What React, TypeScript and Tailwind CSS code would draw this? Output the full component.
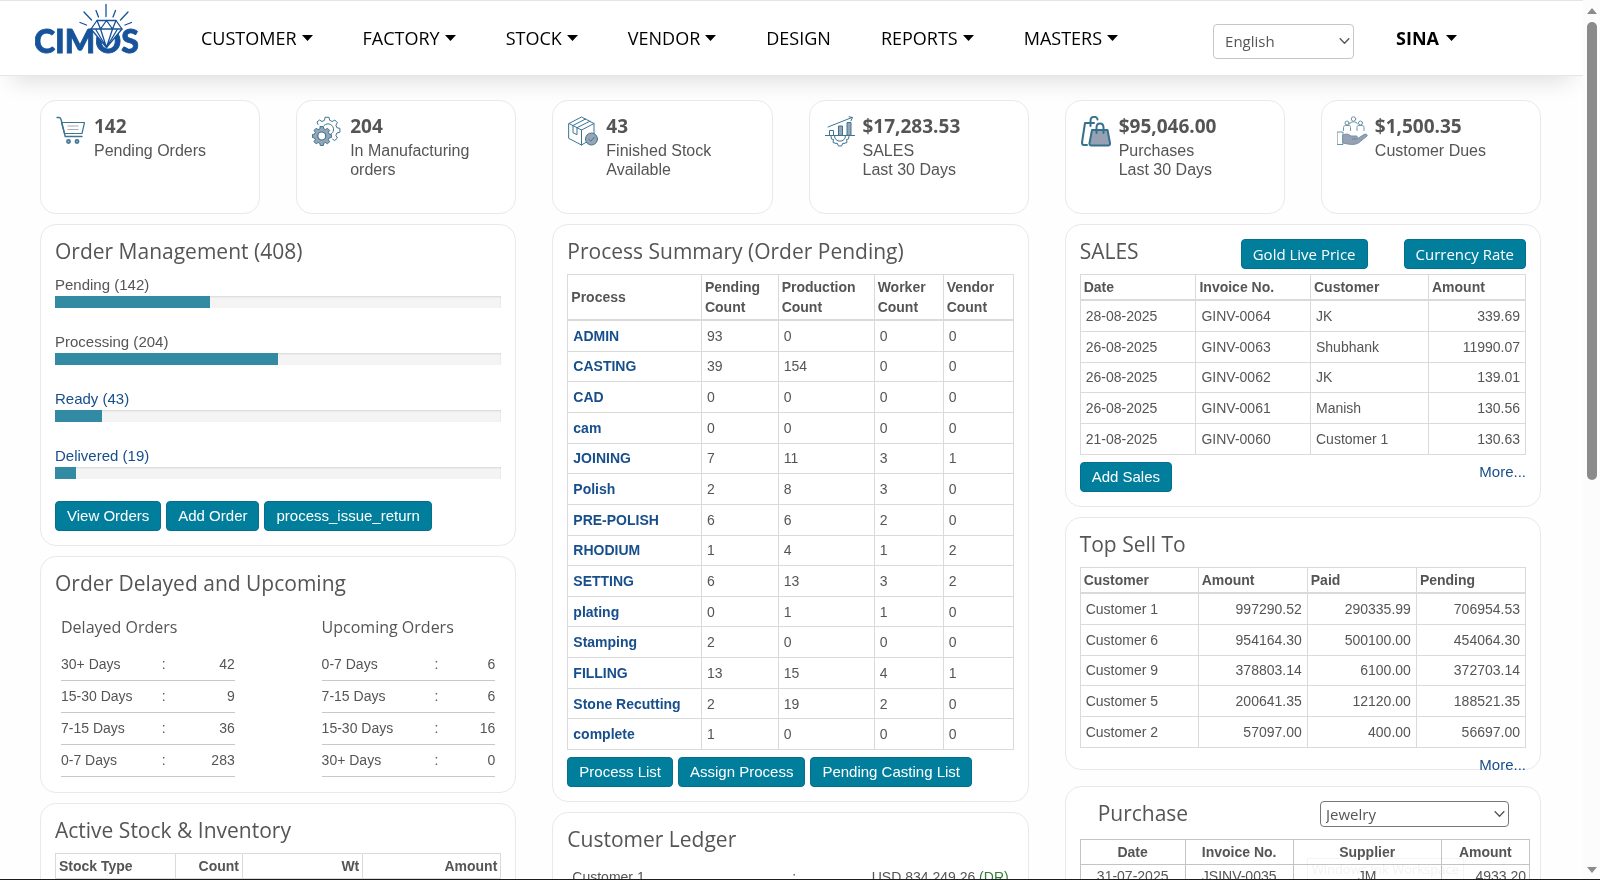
import type { ReactNode } from 'react';

const sans = "font-['Open_Sans',sans-serif]";

const menu = [
  { label: 'CUSTOMER', drop: true },
  { label: 'FACTORY', drop: true },
  { label: 'STOCK', drop: true },
  { label: 'VENDOR', drop: true },
  { label: 'DESIGN', drop: false },
  { label: 'REPORTS', drop: true },
  { label: 'MASTERS', drop: true },
];

const orders = [
  { label: 'Pending', count: 142, link: false },
  { label: 'Processing', count: 204, link: false },
  { label: 'Ready', count: 43, link: true },
  { label: 'Delivered', count: 19, link: true },
];
const totalOrders = orders.reduce((sum, o) => sum + o.count, 0);

const delayed = [['30+ Days', '42'], ['15-30 Days', '9'], ['7-15 Days', '36'], ['0-7 Days', '283']];
const upcoming = [['0-7 Days', '6'], ['7-15 Days', '6'], ['15-30 Days', '16'], ['30+ Days', '0']];

const processes: [string, number, number, number, number][] = [
  ['ADMIN', 93, 0, 0, 0],
  ['CASTING', 39, 154, 0, 0],
  ['CAD', 0, 0, 0, 0],
  ['cam', 0, 0, 0, 0],
  ['JOINING', 7, 11, 3, 1],
  ['Polish', 2, 8, 3, 0],
  ['PRE-POLISH', 6, 6, 2, 0],
  ['RHODIUM', 1, 4, 1, 2],
  ['SETTING', 6, 13, 3, 2],
  ['plating', 0, 1, 1, 0],
  ['Stamping', 2, 0, 0, 0],
  ['FILLING', 13, 15, 4, 1],
  ['Stone Recutting', 2, 19, 2, 0],
  ['complete', 1, 0, 0, 0],
];

const sales = [
  ['28-08-2025', 'GINV-0064', 'JK', '339.69'],
  ['26-08-2025', 'GINV-0063', 'Shubhank', '11990.07'],
  ['26-08-2025', 'GINV-0062', 'JK', '139.01'],
  ['26-08-2025', 'GINV-0061', 'Manish', '130.56'],
  ['21-08-2025', 'GINV-0060', 'Customer 1', '130.63'],
];

const topSell = [
  ['Customer 1', '997290.52', '290335.99', '706954.53'],
  ['Customer 6', '954164.30', '500100.00', '454064.30'],
  ['Customer 9', '378803.14', '6100.00', '372703.14'],
  ['Customer 5', '200641.35', '12120.00', '188521.35'],
  ['Customer 2', '57097.00', '400.00', '56697.00'],
];

function Caret() {
  return (
    <svg width="11" height="6" viewBox="0 0 11 6" fill="currentColor" aria-hidden="true">
      <path d="M0 0h11L5.500 6z" />
    </svg>
  );
}

function Chevron() {
  return (
    <svg width="11" height="7" viewBox="0 0 11 7" fill="none" stroke="#555" strokeWidth="1.3" className="pointer-events-none absolute right-1 top-1/2 -translate-y-1/2" aria-hidden="true">
      <path d="M.7.7l4.800 5 4.800-5" />
    </svg>
  );
}

function Logo() {
  return (
    <svg width="112" height="60" viewBox="0 0 112 60" role="img" aria-label="CIMOS" className="shrink-0">
      <text x="-1" y="52" fill="#17539a" stroke="#17539a" strokeWidth="0.8" fontFamily="Lato, sans-serif" fontWeight="900" fontSize="32">CIMOS</text>
      <path d="M62 19h19l6 9-15.500 18L56 28z" fill="#fff" />
      <g fill="none" stroke="#17539a" strokeWidth="1.300" strokeLinejoin="round" strokeLinecap="round">
        <path d="M62 19.500h19l6 8.500L71.500 46.500 56 28z" />
        <path d="M56 28h31M62 19.500l3.500 8.500 6-8.500 6 8.500 3.500-8.500M65.500 28l6 18.500 6-18.500M60.500 28l11 18.500 11-18.500" />
        <path d="M71 3.500v12M61 9.500l2.500 6.500M80.500 9.500L78 16M49 11l7.500 8M93 11l-7.500 8M45 21.500l6.500 2.500M96.500 21.500L90 24" />
      </g>
    </svg>
  );
}

const line = { fill: 'none', stroke: '#3d7591', strokeWidth: 1.2, strokeLinejoin: 'round', strokeLinecap: 'round' } as const;

function CartIcon() {
  return (
    <svg width="30" height="30" viewBox="0 0 30 30" aria-hidden="true" {...line}>
      <path d="M1 1.500h2.500c1 0 1.300 1 1.700 2.500l4 16.500H26" strokeWidth="1.400" />
      <path d="M5.500 6.500H28.500l-2.500 11H8.500z" />
      <path d="M12 10h10M12 13.500h10" stroke="#a3acb8" />
      <circle cx="12.500" cy="25.500" r="1.700" fill="#a3acb8" strokeWidth="1.500" />
      <circle cx="21" cy="25.500" r="1.700" fill="#a3acb8" strokeWidth="1.500" />
    </svg>
  );
}

function GearsIcon() {
  return (
    <svg width="30" height="30" viewBox="0 0 30 30" aria-hidden="true" {...line}>
      <path d="M6 8.500L5 6l2.500-2 2.500 1.500 2.500-1.200.5-3h4l.7 3 2.500 1.200 2.600-1.500 2.600 2.700-1.500 2.500 1 2.500 3 .7v3.800l-3 .8-1 2.400 1.500 2.600-2.700 2.500-2-1.200" strokeWidth="1" />
      <path d="M12 9.500c4-4 10-.5 9.500 4.500-.2 2-1 3-2.500 4" strokeWidth="1" />
      <path d="M8.300 10.500h3l.5 2.300 1.700.8 2-1.300 2.100 2.100-1.300 2 .8 1.700 2.300.4v3l-2.300.5-.8 1.700 1.300 2-2.100 2.100-2-1.300-1.700.7-.5 2.300h-3l-.5-2.300-1.700-.7-2 1.300L2 25.700l1.300-2-.8-1.700-2-.5v-3l2-.4.8-1.700-1.300-2 2.100-2.100 2 1.300 1.700-.8z" fill="#98a5b4" strokeWidth="1" />
      <circle cx="9.800" cy="20" r="4" fill="#fff" />
    </svg>
  );
}

function BoxIcon() {
  return (
    <svg width="30" height="30" viewBox="0 0 30 30" aria-hidden="true" {...line} strokeWidth="1">
      <path d="M1 7.500L13.500 1 26 7.500v14L13.500 29 1 22.500z" />
      <path d="M1 7.500L13.500 14 26 7.500M13.500 14v15M5 9.500L17.500 3M9 11.700L22 5.200M5 9.700v7l4 2v-7" />
      <circle cx="23.500" cy="23" r="6" fill="#98a5b4" />
      <path d="M20.800 23.200l2 2 3.600-4" />
    </svg>
  );
}

function ChartIcon() {
  return (
    <svg width="30" height="31" viewBox="0 0 30 31" aria-hidden="true" {...line} strokeWidth="1">
      <path d="M3 11L27 1.500M24 .8l3.500.7-1.500 3.200M0 19.500h30" />
      <path d="M4.500 19v-4.500h4V19" />
      <path d="M13.500 19v-9h4v9zM22 19V6.500h4V19z" fill="#98a5b4" />
      <path d="M6 20l.5 3 2 .5-.5 3 3 1 1-.5 1.500 3h3l1.500-3 1 .5 3-1-.5-3 2-.5.500-3M9.500 20c0 7 11 7 11 0" />
    </svg>
  );
}

function BagsIcon() {
  return (
    <svg width="30" height="31" viewBox="0 0 30 31" aria-hidden="true" {...line} stroke="#35708f" strokeWidth="2">
      <path d="M6 29H3c-1.500 0-2-1-2-2.500L4 7h9" />
      <path d="M9.500 10V5c0-5.500 7-5 7-1.500" />
      <path d="M11 14h15.500L29 27c.2 1.500-.5 2.500-2 2.500H10.500c-1.500 0-2.200-1-2-2.500z" fill="#98a1b3" />
      <path d="M15.500 17v-5.500c0-5.500 7-5.500 7 0V17" />
    </svg>
  );
}

function DuesIcon() {
  return (
    <svg width="31" height="31" viewBox="0 0 31 31" aria-hidden="true" {...line} stroke="#6d93a8" strokeWidth="1">
      <circle cx="16.500" cy="3" r="2.200" />
      <circle cx="10" cy="7" r="2" />
      <circle cx="23.500" cy="7" r="2" />
      <path d="M12.500 8c.5-3 7.500-3 8 0M6.500 14.500v-3c0-1.500 1-2 2-2H12c1 0 1.500.8 1.500 2v3M20 14.500v-3c0-1.500.8-2 2-2h3c1.500 0 2 .8 2 2v3" />
      <path d="M.5 16h5.500v12.500H.5z" />
      <path d="M6 19c4-2 6-.5 8 1h5c2 0 2 2.500 0 2.700l-4 .3h5l7-4.500c2-1 4 .2 3 1.500l-8 6.500c-4 3-10 2-16 .5z" fill="#98a1b3" />
    </svg>
  );
}

const stats = [
  { icon: <CartIcon />, value: '142', label: ['Pending Orders'] },
  { icon: <GearsIcon />, value: '204', label: ['In Manufacturing', 'orders'] },
  { icon: <BoxIcon />, value: '43', label: ['Finished Stock', 'Available'] },
  { icon: <ChartIcon />, value: '$17,283.53', label: ['SALES', 'Last 30 Days'] },
  { icon: <BagsIcon />, value: '$95,046.00', label: ['Purchases', 'Last 30 Days'] },
  { icon: <DuesIcon />, value: '$1,500.35', label: ['Customer Dues'] },
];

function Panel({ children }: { children: ReactNode }) {
  return <section className="rounded-2xl border border-[#e9e9e9] bg-white p-[14px]">{children}</section>;
}

function Title({ children }: { children: ReactNode }) {
  return <h2 className={`${sans} mb-[11px] text-[21px] leading-6`}>{children}</h2>;
}

function Btn({ children }: { children: ReactNode }) {
  return (
    <button className="h-[30px] whitespace-nowrap rounded border border-[#04708c] bg-[#017e9c] px-[11px] text-white">
      {children}
    </button>
  );
}

function Days({ title, rows, labelWidth }: { title: string; rows: string[][]; labelWidth: string }) {
  return (
    <div className="w-[40%]">
      <h3 className={`${sans} mb-[9px] text-base leading-6`}>{title}</h3>
      <table className="w-full text-sm">
        <tbody>
          {rows.map(([k, v]) => (
            <tr key={k} className="border-b border-[#c8c8c8]">
              <td className={`h-8 ${labelWidth}`}>{k}</td>
              <td>:</td>
              <td className="text-right">{v}</td>
            </tr>
          ))}
        </tbody>
      </table>
    </div>
  );
}

const th = 'border border-[#dadada] border-b-2 px-[3px] py-[2px] text-left font-bold';
const thRight = 'border border-[#dadada] border-b-2 px-[3px] py-[2px] text-right font-bold';
const td = 'border border-[#dadada] px-[5px] py-1';
const purchaseTh = 'border border-[#c4c4c4] px-[3px] py-[2px]';
const purchaseTd = 'border border-[#c4c4c4] px-[3px] py-px';

export default function App() {
  return (
    <div className="flex h-screen flex-col overflow-hidden bg-[#fefefe] font-['Liberation_Sans',Arial,sans-serif] text-[15px] leading-5 text-[#555]">
      <div className="flex min-h-0 flex-1">
        <div className="min-w-0 flex-1 overflow-hidden">
          <header className={`${sans} flex h-[76px] items-center border-b border-t border-[#e6e6e6] bg-white pl-[35px] shadow-[0_16px_24px_-12px_rgba(0,0,0,0.14)]`}>
            <a href="#home" className="self-start">
              <Logo />
            </a>
            <nav className="ml-[54px] flex gap-[50px] text-lg text-black">
              {menu.map((m) => (
                <a key={m.label} href="#menu" className="flex items-center gap-[5px]">
                  {m.label}
                  {m.drop && <Caret />}
                </a>
              ))}
            </nav>
            <div className="relative ml-auto mt-[6px]">
              <select aria-label="Language" className="h-[35px] w-[141px] appearance-none rounded border border-[#c6c6c6] bg-white px-[11px] text-[15px] text-[#555]">
                <option>English</option>
              </select>
              <Chevron />
            </div>
            <button className="ml-[42px] mr-[126px] flex items-center gap-[7px] text-lg font-bold text-black">
              SINA <Caret />
            </button>
          </header>

          <main className="pl-10 pr-[42px] pt-6">
            <div className="grid grid-cols-6 gap-9">
              {stats.map((s) => (
                <div key={s.value} className="flex h-[114px] gap-2 rounded-2xl border border-[#e9e9e9] bg-white py-[15px] pl-[15px]">
                  <div className="w-[30px] shrink-0">{s.icon}</div>
                  <div>
                    <p className={`${sans} text-[19px] font-bold leading-5`}>{s.value}</p>
                    <p className="mt-[5px] text-base leading-[19px]">
                      {s.label.map((l) => (
                        <span key={l} className="block">{l}</span>
                      ))}
                    </p>
                  </div>
                </div>
              ))}
            </div>

            <div className="mt-[10px] grid grid-cols-3 items-start gap-9">
              <div className="flex flex-col gap-[10px]">
                <Panel>
                  <Title>Order Management ({totalOrders})</Title>
                  <div className="flex flex-col gap-6 pt-px">
                    {orders.map((o) => (
                      <div key={o.label}>
                        {o.link ? (
                          <a href="#orders" className="block text-[#174e8c]">{o.label} ({o.count})</a>
                        ) : (
                          <p>{o.label} ({o.count})</p>
                        )}
                        <div className="mt-px h-3 bg-[#f4f4f4] shadow-[inset_0_1px_2px_rgba(0,0,0,0.12)]">
                          <div className="h-full bg-[#338aa3]" style={{ width: `${(o.count / totalOrders) * 100}%` }} />
                        </div>
                      </div>
                    ))}
                  </div>
                  <div className="mt-[22px] flex gap-[5px]">
                    <Btn>View Orders</Btn>
                    <Btn>Add Order</Btn>
                    <Btn>process_issue_return</Btn>
                  </div>
                </Panel>

                <Panel>
                  <Title>Order Delayed and Upcoming</Title>
                  <div className="flex justify-between px-[6px] pb-px pt-[9px]">
                    <Days title="Delayed Orders" rows={delayed} labelWidth="w-[58%]" />
                    <Days title="Upcoming Orders" rows={upcoming} labelWidth="w-[65%]" />
                  </div>
                </Panel>

                <Panel>
                  <Title>Active Stock &amp; Inventory</Title>
                  <table className="w-full table-fixed text-sm">
                    <thead>
                      <tr>
                        <th className={`${th} w-[27%]`}>Stock Type</th>
                        <th className={`${thRight} w-[15%]`}>Count</th>
                        <th className={`${thRight} w-[27%]`}>Wt</th>
                        <th className={thRight}>Amount</th>
                      </tr>
                    </thead>
                  </table>
                </Panel>
              </div>

              <div className="flex flex-col gap-[10px]">
                <Panel>
                  <Title>Process Summary (Order Pending)</Title>
                  <table className="h-[476px] w-full table-fixed text-sm">
                    <thead>
                      <tr>
                        <th className={`${th} w-[30%]`}>Process</th>
                        <th className={th}>Pending Count</th>
                        <th className={`${th} w-[96px]`}>Production Count</th>
                        <th className={`${th} w-[69px]`}>Worker Count</th>
                        <th className={`${th} w-[70px]`}>Vendor Count</th>
                      </tr>
                    </thead>
                    <tbody>
                      {processes.map(([name, ...counts]) => (
                        <tr key={name}>
                          <td className={td}>
                            <a href="#process" className="font-bold text-[#174e8c]">{name}</a>
                          </td>
                          {counts.map((c, i) => (
                            <td key={i} className={td}>{c}</td>
                          ))}
                        </tr>
                      ))}
                    </tbody>
                  </table>
                  <div className="mt-[7px] flex gap-[5px]">
                    <Btn>Process List</Btn>
                    <Btn>Assign Process</Btn>
                    <Btn>Pending Casting List</Btn>
                  </div>
                </Panel>

                <Panel>
                  <Title>Customer Ledger</Title>
                  <div className="flex justify-between px-[5px] pt-[5px] text-sm">
                    <span className="w-[220px]">Customer 1</span>
                    <span className="flex-1">:</span>
                    <span>USD 834,249.26 <span className="text-[#2e7d32]">(DR)</span></span>
                  </div>
                </Panel>
              </div>

              <div className="flex flex-col gap-[10px]">
                <Panel>
                  <div className="flex items-start">
                    <Title>SALES</Title>
                    <div className={`${sans} ml-auto flex gap-9`}>
                      <Btn>Gold Live Price</Btn>
                      <Btn>Currency Rate</Btn>
                    </div>
                  </div>
                  <table className="h-[181px] w-full table-fixed text-sm">
                    <thead>
                      <tr>
                        <th className={`${th} w-[26%]`}>Date</th>
                        <th className={th}>Invoice No.</th>
                        <th className={`${th} w-[118px]`}>Customer</th>
                        <th className={`${th} w-[97px]`}>Amount</th>
                      </tr>
                    </thead>
                    <tbody>
                      {sales.map((r) => (
                        <tr key={r[1]}>
                          <td className={td}>{r[0]}</td>
                          <td className={td}>{r[1]}</td>
                          <td className={td}>{r[2]}</td>
                          <td className={`${td} text-right`}>{r[3]}</td>
                        </tr>
                      ))}
                    </tbody>
                  </table>
                  <div className="mt-[7px] flex items-start justify-between">
                    <Btn>Add Sales</Btn>
                    <a href="#sales" className="text-[#174e8c]">More...</a>
                  </div>
                </Panel>

                <Panel>
                  <Title>Top Sell To</Title>
                  <table className="h-[181px] w-full table-fixed text-sm">
                    <thead>
                      <tr>
                        <th className={`${th} w-[118px]`}>Customer</th>
                        <th className={th}>Amount</th>
                        <th className={th}>Paid</th>
                        <th className={th}>Pending</th>
                      </tr>
                    </thead>
                    <tbody>
                      {topSell.map((r) => (
                        <tr key={r[0]}>
                          <td className={td}>{r[0]}</td>
                          <td className={`${td} text-right`}>{r[1]}</td>
                          <td className={`${td} text-right`}>{r[2]}</td>
                          <td className={`${td} text-right`}>{r[3]}</td>
                        </tr>
                      ))}
                    </tbody>
                  </table>
                  {/* the link hangs over the panel's lower border */}
                  <div className="h-[7px] pt-[7px] text-right">
                    <a href="#customers" className="text-[#174e8c]">More...</a>
                  </div>
                </Panel>

                <div className="mt-[6px]">
                  <Panel>
                    <div className={`${sans} flex items-start justify-between pl-[18px] pr-[17px]`}>
                      <Title>Purchase</Title>
                      <div className="relative">
                        <select aria-label="Purchase type" className="h-[26px] w-[189px] appearance-none rounded border border-[#767676] bg-white px-[5px] text-[15px] text-[#555]">
                          <option>Jewelry</option>
                        </select>
                        <Chevron />
                      </div>
                    </div>
                    <div className="-mr-1 mt-[3px]">
                      <table className="w-full table-fixed text-sm">
                        <thead>
                          <tr>
                            <th className={`${purchaseTh} w-[105px]`}>Date</th>
                            <th className={`${purchaseTh} w-[108px]`}>Invoice No.</th>
                            <th className={`${purchaseTh} w-[148px]`}>Supplier</th>
                            <th className={purchaseTh}>Amount</th>
                          </tr>
                        </thead>
                        <tbody>
                          <tr className="text-center">
                            <td className={purchaseTd}>31-07-2025</td>
                            <td className={purchaseTd}>JSINV-0035</td>
                            <td className={purchaseTd}>JM</td>
                            <td className={`${purchaseTd} text-right`}>4933.20</td>
                          </tr>
                        </tbody>
                      </table>
                    </div>
                  </Panel>
                </div>
              </div>
            </div>
          </main>
        </div>

        <div className="flex w-[17px] flex-col items-center bg-[#fcfcfc] pb-[6px] pt-2 text-[#8b8b8b]" aria-hidden="true">
          <svg width="10" height="6" viewBox="0 0 10 6" fill="currentColor"><path d="M0 6h10L5 0z" /></svg>
          <div className="mb-auto mt-2 h-[53%] w-[10px] rounded-full bg-[#8b8b8b]" />
          <svg width="10" height="6" viewBox="0 0 10 6" fill="currentColor"><path d="M0 0h10L5 6z" /></svg>
        </div>
      </div>
      <div className="h-px bg-[#1c1c1c]" />
      <div role="tooltip" className={`${sans} pointer-events-none absolute bottom-px right-[136px] border border-b-0 border-[#f5f5f5] px-1 text-[13px] text-[#f2f2f2] mix-blend-multiply`}>
        Windows Ink Workspace
      </div>
    </div>
  );
}
